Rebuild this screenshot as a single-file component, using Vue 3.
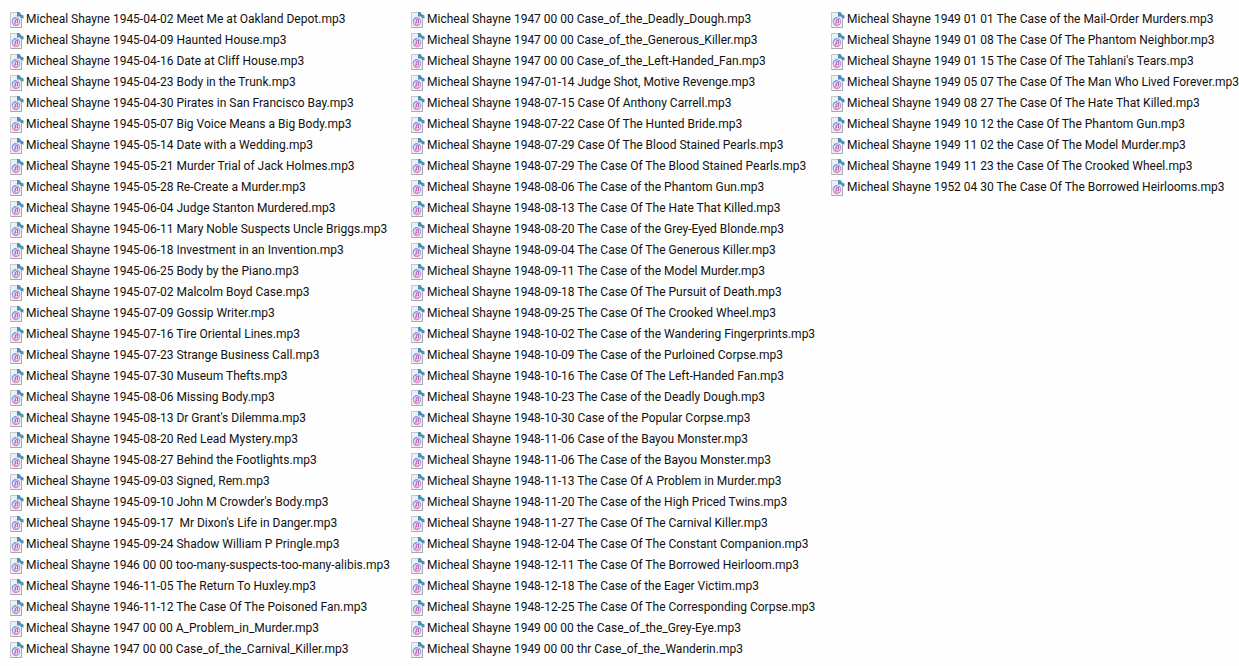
<script setup>
const columns = [
  [
    '1945-04-02 Meet Me at Oakland Depot',
    '1945-04-09 Haunted House',
    '1945-04-16 Date at Cliff House',
    '1945-04-23 Body in the Trunk',
    '1945-04-30 Pirates in San Francisco Bay',
    '1945-05-07 Big Voice Means a Big Body',
    '1945-05-14 Date with a Wedding',
    '1945-05-21 Murder Trial of Jack Holmes',
    '1945-05-28 Re-Create a Murder',
    '1945-06-04 Judge Stanton Murdered',
    '1945-06-11 Mary Noble Suspects Uncle Briggs',
    '1945-06-18 Investment in an Invention',
    '1945-06-25 Body by the Piano',
    '1945-07-02 Malcolm Boyd Case',
    '1945-07-09 Gossip Writer',
    '1945-07-16 Tire Oriental Lines',
    '1945-07-23 Strange Business Call',
    '1945-07-30 Museum Thefts',
    '1945-08-06 Missing Body',
    "1945-08-13 Dr Grant's Dilemma",
    '1945-08-20 Red Lead Mystery',
    '1945-08-27 Behind the Footlights',
    '1945-09-03 Signed, Rem',
    "1945-09-10 John M Crowder's Body",
    "1945-09-17  Mr Dixon's Life in Danger",
    '1945-09-24 Shadow William P Pringle',
    '1946 00 00 too-many-suspects-too-many-alibis',
    '1946-11-05 The Return To Huxley',
    '1946-11-12 The Case Of The Poisoned Fan',
    '1947 00 00 A_Problem_in_Murder',
    '1947 00 00 Case_of_the_Carnival_Killer',
  ],
  [
    '1947 00 00 Case_of_the_Deadly_Dough',
    '1947 00 00 Case_of_the_Generous_Killer',
    '1947 00 00 Case_of_the_Left-Handed_Fan',
    '1947-01-14 Judge Shot, Motive Revenge',
    '1948-07-15 Case Of Anthony Carrell',
    '1948-07-22 Case Of The Hunted Bride',
    '1948-07-29 Case Of The Blood Stained Pearls',
    '1948-07-29 The Case Of The Blood Stained Pearls',
    '1948-08-06 The Case of the Phantom Gun',
    '1948-08-13 The Case Of The Hate That Killed',
    '1948-08-20 The Case of the Grey-Eyed Blonde',
    '1948-09-04 The Case Of The Generous Killer',
    '1948-09-11 The Case of the Model Murder',
    '1948-09-18 The Case Of The Pursuit of Death',
    '1948-09-25 The Case Of The Crooked Wheel',
    '1948-10-02 The Case of the Wandering Fingerprints',
    '1948-10-09 The Case of the Purloined Corpse',
    '1948-10-16 The Case Of The Left-Handed Fan',
    '1948-10-23 The Case of the Deadly Dough',
    '1948-10-30 Case of the Popular Corpse',
    '1948-11-06 Case of the Bayou Monster',
    '1948-11-06 The Case of the Bayou Monster',
    '1948-11-13 The Case Of A Problem in Murder',
    '1948-11-20 The Case of the High Priced Twins',
    '1948-11-27 The Case Of The Carnival Killer',
    '1948-12-04 The Case Of The Constant Companion',
    '1948-12-11 The Case Of The Borrowed Heirloom',
    '1948-12-18 The Case of the Eager Victim',
    '1948-12-25 The Case Of The Corresponding Corpse',
    '1949 00 00 the Case_of_the_Grey-Eye',
    '1949 00 00 thr Case_of_the_Wanderin',
  ],
  [
    '1949 01 01 The Case of the Mail-Order Murders',
    '1949 01 08 The Case Of The Phantom Neighbor',
    "1949 01 15 The Case Of The Tahlani's Tears",
    '1949 05 07 The Case Of The Man Who Lived Forever',
    '1949 08 27 The Case Of The Hate That Killed',
    '1949 10 12 the Case Of The Phantom Gun',
    '1949 11 02 the Case Of The Model Murder',
    '1949 11 23 the Case Of The Crooked Wheel',
    '1952 04 30 The Case Of The Borrowed Heirlooms',
  ],
]
</script>

<template>
  <main class="files">
    <ul v-for="(column, i) in columns" :key="i" class="column">
      <li v-for="title in column" :key="title" class="file">
        <svg class="icon" viewBox="0 0 14 16" aria-hidden="true">
          <path d="M.5 .5H8L11.5 4V15.5H.5Z" fill="#eeeef3" stroke="#c6c6cc" />
          <path d="M.5 15.5H11.5V7" fill="none" stroke="#a9a9ae" />
          <path d="M7 0H9.5L11 2.5L13.5 3.5V6.5L10.5 6V4.5H7Z" fill="#4790b8" />
          <circle cx="6" cy="9.5" r="3.8" fill="#f1e4f4" stroke="#9d92dc" />
          <path d="M2.2 9.5A3.8 3.8 0 0 1 6 5.7" fill="none" stroke="#62a8e6" stroke-width="1.2" />
          <path d="M3 12A3.8 3.8 0 0 0 8 12.8" fill="none" stroke="#e285c0" stroke-width="1.2" />
          <path d="M5.2 11V8L7.6 7.5V10.5" fill="none" stroke="#a950bd" />
          <path d="M4.2 11.2H5.5M6.6 10.7H7.9" stroke="#d0508c" stroke-width="1.2" />
        </svg>
        <span class="name">Micheal Shayne {{ title }}.mp3</span>
      </li>
    </ul>
  </main>
</template>

<style>
body {
  background: #fefefe;
}
</style>

<style scoped>
.files {
  display: grid;
  grid-template-columns: 401fr 420fr 400fr;
  padding: 9px 8px 6px 10px;
  color: #111;
  font-family: Roboto, "Noto Sans", sans-serif;
  font-size: 12px;
  line-height: 21px;
}

.column {
  min-width: 0;
  margin: 0;
  padding: 0;
  list-style: none;
}

.file {
  display: flex;
  align-items: center;
  gap: 2px;
  height: 21px;
}

.icon {
  flex: none;
  width: 14px;
  height: 16px;
}

.name {
  white-space: pre;
}
</style>
